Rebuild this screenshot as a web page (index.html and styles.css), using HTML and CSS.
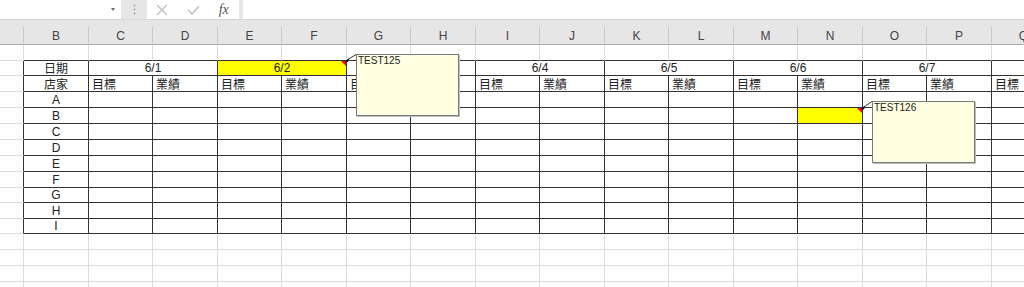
FILE: index.html
```html
<!DOCTYPE html>
<html>
<head>
<meta charset="utf-8">
<link rel="stylesheet" href="styles.css">
</head>
<body>
<div class="fbar">
  <div class="namebox"><span class="caret"></span></div>
  <div class="grip"><svg width="3" height="12" viewBox="0 0 3 12"><circle cx="1.5" cy="1.5" r="1" fill="#a8a8a8"/><circle cx="1.5" cy="5.5" r="1" fill="#a8a8a8"/><circle cx="1.5" cy="9.5" r="1" fill="#a8a8a8"/></svg></div>
  <div class="fbtns">
    <div class="slot"><svg width="12" height="12" viewBox="0 0 12 12"><path d="M1 1 L11 11 M11 1 L1 11" stroke="#bdbdbd" stroke-width="1.2" fill="none"/></svg></div>
    <div class="slot"><svg width="13" height="10" viewBox="0 0 13 10"><path d="M1 5 L5 9 L12 1" stroke="#bdbdbd" stroke-width="1.3" fill="none"/></svg></div>
    <div class="slot"><span class="fx">fx</span></div>
  </div>
  <div class="fgap"></div>
  <div class="finput"></div>
</div>
<div class="gapbar"></div>
<div class="sheet">
  <div class="h"></div><div class="h">B</div><div class="h">C</div><div class="h">D</div><div class="h">E</div><div class="h">F</div><div class="h">G</div><div class="h">H</div><div class="h">I</div><div class="h">J</div><div class="h">K</div><div class="h">L</div><div class="h">M</div><div class="h">N</div><div class="h">O</div><div class="h">P</div><div class="h">Q</div>

  <div class="c"></div><div class="c tb"></div><div class="c tb"></div><div class="c tb"></div><div class="c tb"></div><div class="c tb"></div><div class="c tb"></div><div class="c tb"></div><div class="c tb"></div><div class="c tb"></div><div class="c tb"></div><div class="c tb"></div><div class="c tb"></div><div class="c tb"></div><div class="c tb"></div><div class="c tb"></div><div class="c tb"></div>

  <div class="c lb"></div><div class="t cjk">日期</div><div class="t span2">6/1</div><div class="t span2 y note">6/2</div><div class="t span2">6/3</div><div class="t span2">6/4</div><div class="t span2">6/5</div><div class="t span2">6/6</div><div class="t span2">6/7</div><div class="t"></div>

  <div class="c lb"></div><div class="t cjk">店家</div><div class="t l cjk">目標</div><div class="t l cjk">業績</div><div class="t l cjk">目標</div><div class="t l cjk">業績</div><div class="t l cjk">目標</div><div class="t l cjk">業績</div><div class="t l cjk">目標</div><div class="t l cjk">業績</div><div class="t l cjk">目標</div><div class="t l cjk">業績</div><div class="t l cjk">目標</div><div class="t l cjk">業績</div><div class="t l cjk">目標</div><div class="t l cjk">業績</div><div class="t l cjk">目標</div>

  <div class="c lb"></div><div class="t">A</div><div class="t"></div><div class="t"></div><div class="t"></div><div class="t"></div><div class="t"></div><div class="t"></div><div class="t"></div><div class="t"></div><div class="t"></div><div class="t"></div><div class="t"></div><div class="t"></div><div class="t"></div><div class="t"></div><div class="t"></div>

  <div class="c lb"></div><div class="t">B</div><div class="t"></div><div class="t"></div><div class="t"></div><div class="t"></div><div class="t"></div><div class="t"></div><div class="t"></div><div class="t"></div><div class="t"></div><div class="t"></div><div class="t"></div><div class="t y note"></div><div class="t"></div><div class="t"></div><div class="t"></div>

  <div class="c lb"></div><div class="t">C</div><div class="t"></div><div class="t"></div><div class="t"></div><div class="t"></div><div class="t"></div><div class="t"></div><div class="t"></div><div class="t"></div><div class="t"></div><div class="t"></div><div class="t"></div><div class="t"></div><div class="t"></div><div class="t"></div><div class="t"></div>

  <div class="c lb"></div><div class="t">D</div><div class="t"></div><div class="t"></div><div class="t"></div><div class="t"></div><div class="t"></div><div class="t"></div><div class="t"></div><div class="t"></div><div class="t"></div><div class="t"></div><div class="t"></div><div class="t"></div><div class="t"></div><div class="t"></div><div class="t"></div>

  <div class="c lb"></div><div class="t">E</div><div class="t"></div><div class="t"></div><div class="t"></div><div class="t"></div><div class="t"></div><div class="t"></div><div class="t"></div><div class="t"></div><div class="t"></div><div class="t"></div><div class="t"></div><div class="t"></div><div class="t"></div><div class="t"></div><div class="t"></div>

  <div class="c lb"></div><div class="t">F</div><div class="t"></div><div class="t"></div><div class="t"></div><div class="t"></div><div class="t"></div><div class="t"></div><div class="t"></div><div class="t"></div><div class="t"></div><div class="t"></div><div class="t"></div><div class="t"></div><div class="t"></div><div class="t"></div><div class="t"></div>

  <div class="c lb"></div><div class="t">G</div><div class="t"></div><div class="t"></div><div class="t"></div><div class="t"></div><div class="t"></div><div class="t"></div><div class="t"></div><div class="t"></div><div class="t"></div><div class="t"></div><div class="t"></div><div class="t"></div><div class="t"></div><div class="t"></div><div class="t"></div>

  <div class="c lb"></div><div class="t">H</div><div class="t"></div><div class="t"></div><div class="t"></div><div class="t"></div><div class="t"></div><div class="t"></div><div class="t"></div><div class="t"></div><div class="t"></div><div class="t"></div><div class="t"></div><div class="t"></div><div class="t"></div><div class="t"></div><div class="t"></div>

  <div class="c lb"></div><div class="t">I</div><div class="t"></div><div class="t"></div><div class="t"></div><div class="t"></div><div class="t"></div><div class="t"></div><div class="t"></div><div class="t"></div><div class="t"></div><div class="t"></div><div class="t"></div><div class="t"></div><div class="t"></div><div class="t"></div><div class="t"></div>

  <div class="c"></div><div class="c"></div><div class="c"></div><div class="c"></div><div class="c"></div><div class="c"></div><div class="c"></div><div class="c"></div><div class="c"></div><div class="c"></div><div class="c"></div><div class="c"></div><div class="c"></div><div class="c"></div><div class="c"></div><div class="c"></div><div class="c"></div>
  <div class="c"></div><div class="c"></div><div class="c"></div><div class="c"></div><div class="c"></div><div class="c"></div><div class="c"></div><div class="c"></div><div class="c"></div><div class="c"></div><div class="c"></div><div class="c"></div><div class="c"></div><div class="c"></div><div class="c"></div><div class="c"></div><div class="c"></div>
  <div class="c"></div><div class="c"></div><div class="c"></div><div class="c"></div><div class="c"></div><div class="c"></div><div class="c"></div><div class="c"></div><div class="c"></div><div class="c"></div><div class="c"></div><div class="c"></div><div class="c"></div><div class="c"></div><div class="c"></div><div class="c"></div><div class="c"></div>
  <div class="c"></div><div class="c"></div><div class="c"></div><div class="c"></div><div class="c"></div><div class="c"></div><div class="c"></div><div class="c"></div><div class="c"></div><div class="c"></div><div class="c"></div><div class="c"></div><div class="c"></div><div class="c"></div><div class="c"></div><div class="c"></div><div class="c"></div>

  <svg class="links" width="1056" height="260" viewBox="0 0 1056 260">
    <path d="M347 33 L356 27.5" stroke="#333" stroke-width="1" fill="none"/>
    <path d="M345 34.5 L349 31.5 L348 35 Z" fill="#000"/>
    <path d="M863 80.5 L872 74.5" stroke="#333" stroke-width="1" fill="none"/>
    <path d="M861 82 L865 79 L864 82.5 Z" fill="#000"/>
  </svg>
  <div class="cmt cmt1">TEST125</div>
  <div class="cmt cmt2">TEST126</div>
</div>
</body>
</html>
```
FILE: styles.css
```css
* { box-sizing: border-box; }
html, body { margin: 0; padding: 0; }
body {
  width: 1024px;
  height: 287px;
  overflow: hidden;
  background: #fff;
  font-family: "Liberation Sans", Arial, sans-serif;
}
.fbar {
  display: flex;
  height: 19px;
  background: #e6e6e6;
}
.namebox {
  width: 121px;
  background: #fff;
  display: flex;
  align-items: center;
  justify-content: flex-end;
  padding-right: 6px;
}
.caret {
  width: 0;
  height: 0;
  border-left: 2.5px solid transparent;
  border-right: 2.5px solid transparent;
  border-top: 3px solid #6a6a6a;
}
.grip {
  width: 26px;
  display: flex;
  align-items: center;
  justify-content: center;
}
.fbtns {
  width: 92px;
  background: #fff;
  display: flex;
}
.slot {
  width: 31px;
  height: 19px;
  display: flex;
  align-items: center;
  justify-content: center;
}
.fx {
  font-family: "Liberation Serif", serif;
  font-style: italic;
  font-size: 14px;
  color: #555;
  line-height: 1;
}
.fgap { width: 4px; }
.finput { flex: 1; background: #fff; }
.gapbar {
  height: 8px;
  background: #e6e6e6;
  border-top: 1px solid #d6d6d6;
}
.sheet {
  position: relative;
  display: grid;
  width: 1056px;
  grid-template-columns: 24px repeat(8, 65px 64px);
  grid-template-rows: 18px 16px 15px 16px repeat(6, 16px) 15px 16px 15px repeat(4, 16px);
}
.h {
  background: #e6e6e6;
  border-right: 1px solid #c9c9c9;
  border-bottom: 1px solid #ababab;
  color: #444;
  font-size: 12px;
  display: flex;
  align-items: center;
  justify-content: center;
}
.c {
  border-right: 1px solid #dcdcdc;
  border-bottom: 1px solid #dcdcdc;
}
.tb { border-bottom-color: #333; }
.lb { border-right-color: #333; }
.t {
  border-right: 1px solid #333;
  border-bottom: 1px solid #333;
  font-size: 12px;
  color: #222;
  display: flex;
  align-items: center;
  justify-content: center;
  white-space: nowrap;
  line-height: 1;
}
.cjk { font-family: "Noto Sans CJK TC", "Noto Sans CJK SC", sans-serif; }
.l { justify-content: flex-start; padding-left: 3px; }
.span2 { grid-column: span 2; }
.y { background: #ffff00; }
.note { position: relative; }
.note::after {
  content: "";
  position: absolute;
  top: 0;
  right: 0;
  border-top: 5px solid #ff0000;
  border-left: 5px solid transparent;
}
.links {
  position: absolute;
  left: 0;
  top: 0;
  pointer-events: none;
}
.cmt {
  position: absolute;
  width: 103px;
  height: 62px;
  background: #ffffe1;
  border: 1px solid #7a7a7a;
  box-shadow: 1px 1px 0 #bdbdbd;
  font-size: 10px;
  line-height: 11px;
  padding: 0 1px;
  color: #222;
}
.cmt1 { left: 356px; top: 27px; }
.cmt2 { left: 872px; top: 74px; }
```
